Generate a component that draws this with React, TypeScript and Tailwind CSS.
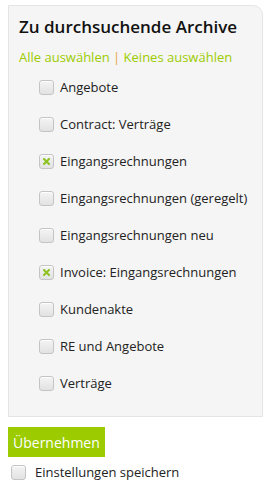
import { useState } from 'react'

const archives = [
  { name: 'Angebote', checked: false },
  { name: 'Contract: Verträge', checked: false },
  { name: 'Eingangsrechnungen', checked: true },
  { name: 'Eingangsrechnungen (geregelt)', checked: false },
  { name: 'Eingangsrechnungen neu', checked: false },
  { name: 'Invoice: Eingangsrechnungen', checked: true },
  { name: 'Kundenakte', checked: false },
  { name: 'RE und Angebote', checked: false },
  { name: 'Verträge', checked: false },
]

function Box({ checked, onClick }: { checked: boolean; onClick?: () => void }) {
  return (
    <span
      onClick={onClick}
      className="flex h-[15px] w-[15px] shrink-0 items-center justify-center rounded-[3px] border border-[#c4c4c4] bg-gradient-to-b from-[#f4f4f4] to-[#e2e2e2] shadow-[inset_0_1px_0_#fff]"
    >
      {checked && (
        <svg width="7" height="7" viewBox="0 0 7 7">
          <path d="M1 1L6 6M6 1L1 6" stroke="#8dc21f" strokeWidth="2" strokeLinecap="square" />
        </svg>
      )}
    </span>
  )
}

export default function App() {
  const [items, setItems] = useState(archives)
  const [save, setSave] = useState(false)

  const toggle = (i: number) =>
    setItems(items.map((it, j) => (j === i ? { ...it, checked: !it.checked } : it)))

  return (
    <div className="min-h-[500px] bg-white pt-[5px] font-['Open_Sans',sans-serif] text-[#222]">
      <div className="ml-2 w-[255px] rounded-tr-[10px] border border-[#e4e4e4] bg-[#f5f5f5] pb-[14px] pl-[10px]">
        <h2 className="pt-[10px] text-[17px] font-semibold leading-[22px] text-[#111]">
          Zu durchsuchende Archive
        </h2>
        <div className="mt-[10px] text-[13px] leading-[18px]">
          <a className="cursor-pointer text-[#9ccc00]" onClick={() => setItems(items.map(it => ({ ...it, checked: true })))}>
            Alle auswählen
          </a>
          <span className="text-[#e8a33d]"> | </span>
          <a className="cursor-pointer text-[#9ccc00]" onClick={() => setItems(items.map(it => ({ ...it, checked: false })))}>
            Keines auswählen
          </a>
        </div>
        <ul className="mt-[3px] pl-[20px]">
          {items.map((it, i) => (
            <li key={it.name} className="flex h-[37px] items-center gap-[6px] text-[13px]">
              <Box checked={it.checked} onClick={() => toggle(i)} />
              <span>{it.name}</span>
            </li>
          ))}
        </ul>
      </div>
      <button className="ml-2 mt-[10px] h-[30px] bg-[#9ccc00] px-[5px] text-[14px] text-white">
        Übernehmen
      </button>
      <label className="ml-[11px] mt-[6px] flex items-center gap-[9px] text-[13px]">
        <Box checked={save} onClick={() => setSave(!save)} />
        <span>Einstellungen speichern</span>
      </label>
    </div>
  )
}
